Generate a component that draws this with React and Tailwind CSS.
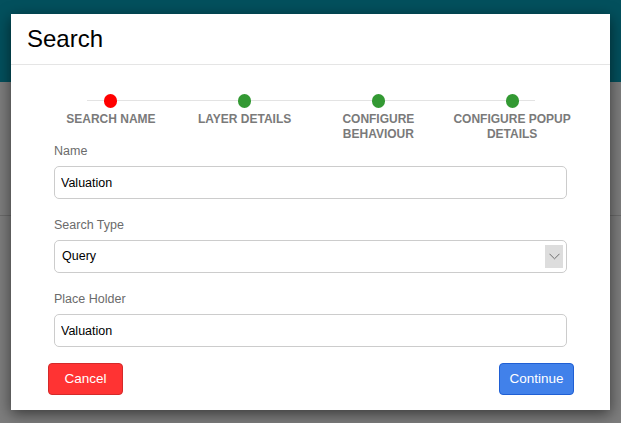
import React, { useState } from "react";

const steps = [
  { label: "Search Name", active: true },
  { label: "Layer Details" },
  { label: "Configure Behaviour" },
  { label: "Configure Popup Details" },
];

function Field({ label, children }) {
  return (
    <div className="flex flex-col">
      <label className="text-[12.5px] leading-4 text-[#6b6b6b] mb-[7px]">{label}</label>
      {children}
    </div>
  );
}

export default function App() {
  const [name, setName] = useState("Valuation");
  const [type, setType] = useState("Query");
  const [holder, setHolder] = useState("Valuation");

  return (
    <div className="relative w-[621px] h-[423px] overflow-hidden font-['Liberation_Sans',Arial,sans-serif]">
      {/* page behind the dialog */}
      <div className="h-[82px] bg-[#03505d]" />
      <div className="h-[134px] bg-[#7d7d7d] border-b border-[#6a6a6a]" />
      <div className="h-[207px] bg-[#7d7d7d]" />

      <div className="absolute left-[11px] top-[14px] w-[599px] h-[396px] bg-white shadow-[0_4px_14px_rgba(0,0,0,0.55)] flex flex-col">
        <div className="h-[51px] border-b border-[#e5e5e5] px-4 flex items-center">
          <h1 className="text-[24px] text-black leading-none">Search</h1>
        </div>

        {/* stepper */}
        <div className="relative grid grid-cols-4 pl-[33px] pr-[31px] pt-[29px]">
          <div className="absolute left-[76px] right-[75px] top-[35px] h-px bg-[#e3e3e3]" />
          {steps.map((s) => (
            <div key={s.label} className="relative flex flex-col items-center">
              <div className={"w-[13px] h-[14px] rounded-full " + (s.active ? "bg-[#ff0000]" : "bg-[#339933]")} />
              <div className="mt-[4px] max-w-[122px] text-center text-[12px] leading-[15px] font-bold uppercase text-[#7a7a7a]">
                {s.label}
              </div>
            </div>
          ))}
        </div>

        {/* form */}
        <div className="px-[43px] mt-[1px] flex flex-col gap-[18px]">
          <Field label="Name">
            <input
              value={name}
              onChange={(e) => setName(e.target.value)}
              className="h-[33px] rounded-[5px] border border-[#cccccc] px-[6px] text-[12.5px] text-black outline-none"
            />
          </Field>
          <Field label="Search Type">
            <div className="relative">
              <select
                value={type}
                onChange={(e) => setType(e.target.value)}
                className="w-full h-[33px] appearance-none rounded-[5px] border border-[#cccccc] bg-white px-[7px] text-[12.5px] text-black outline-none"
              >
                <option>Query</option>
                <option>Locator</option>
              </select>
              <div className="pointer-events-none absolute right-[4px] top-[5px] w-[18px] h-[23px] bg-[#dddddd] flex items-center justify-center">
                <svg width="11" height="7" viewBox="0 0 11 7" fill="none">
                  <path d="M0.5 0.8 L5.5 5.8 L10.5 0.8" stroke="#6e6e6e" strokeWidth="1" />
                </svg>
              </div>
            </div>
          </Field>
          <Field label="Place Holder">
            <input
              value={holder}
              onChange={(e) => setHolder(e.target.value)}
              className="h-[33px] rounded-[5px] border border-[#cccccc] px-[6px] text-[12.5px] text-black outline-none"
            />
          </Field>
        </div>

        <div className="pl-[37px] pr-[36px] mt-4 flex justify-between">
          <button className="w-[75px] h-[32px] rounded-[4px] bg-[#ff3333] border border-[#d42a2a] text-white text-[13.5px]">
            Cancel
          </button>
          <button className="w-[75px] h-[32px] rounded-[4px] bg-[#4181ea] border border-[#1f5fd4] text-white text-[13.5px]">
            Continue
          </button>
        </div>
      </div>
    </div>
  );
}
